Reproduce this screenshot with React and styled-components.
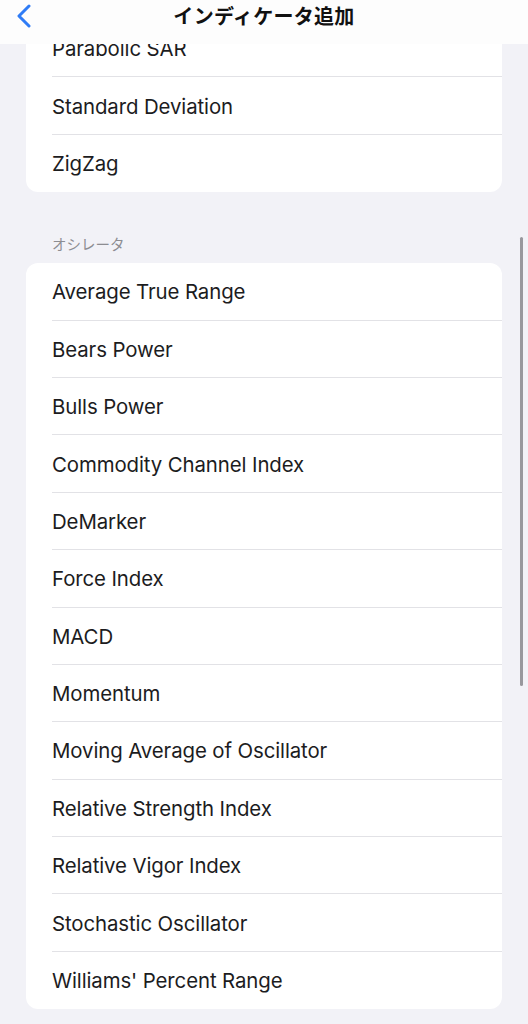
import React from 'react'
import styled, { createGlobalStyle } from 'styled-components'

const GlobalStyle = createGlobalStyle`
  html, body {
    margin: 0;
    padding: 0;
    background: #f2f2f7;
    font-family: Inter, "Noto Sans CJK JP", sans-serif;
    -webkit-font-smoothing: antialiased;
  }
`

const Screen = styled.div`
  position: relative;
  width: 528px;
  height: 1024px;
  overflow: hidden;
  background: #f2f2f7;
`

const NavBar = styled.header`
  position: absolute;
  top: 0;
  left: 0;
  right: 0;
  height: 44px;
  background: #fdfdfd;
  display: flex;
  align-items: center;
  justify-content: center;
  z-index: 2;
`

const BackButton = styled.button`
  position: absolute;
  left: 10px;
  top: 2px;
  width: 28px;
  height: 28px;
  border: 0;
  padding: 0;
  background: none;
  display: flex;
  align-items: center;
  justify-content: center;
`

const Title = styled.h1`
  margin: 0 0 13px;
  font-family: "Noto Sans CJK JP", sans-serif;
  font-size: 20px;
  font-weight: 600;
  color: #111;
  letter-spacing: 0.3px;
`

const Content = styled.main`
  display: flex;
  flex-direction: column;
  padding: 0 26px;
  margin-top: 20px;
`

const SectionLabel = styled.div`
  font-family: "Noto Sans CJK JP", sans-serif;
  font-size: 14.5px;
  color: #8d8d92;
  padding: 41px 26px 9px;
`

const Card = styled.ul`
  list-style: none;
  margin: 0;
  padding: 0;
  background: #fff;
  border-radius: 12px;
  overflow: hidden;
`

const Row = styled.li`
  height: 57.4px;
  display: flex;
  align-items: center;
  margin-left: 26px;
  font-size: 20.4px;
  color: #1c1c1e;
  letter-spacing: -0.1px;
  box-shadow: ${p => (p.$last ? 'none' : 'inset 0 -1px 0 #e2e2e6')};
`

const ScrollIndicator = styled.div`
  position: absolute;
  right: 5px;
  top: 237px;
  width: 3px;
  height: 449px;
  border-radius: 2px;
  background: #98989d;
`

const trend = ['Parabolic SAR', 'Standard Deviation', 'ZigZag']

const oscillators = [
  'Average True Range',
  'Bears Power',
  'Bulls Power',
  'Commodity Channel Index',
  'DeMarker',
  'Force Index',
  'MACD',
  'Momentum',
  'Moving Average of Oscillator',
  'Relative Strength Index',
  'Relative Vigor Index',
  'Stochastic Oscillator',
  "Williams' Percent Range",
]

const List = ({ items }) => (
  <Card>
    {items.map((name, i) => (
      <Row key={name} $last={i === items.length - 1}>
        {name}
      </Row>
    ))}
  </Card>
)

const App = () => (
  <Screen>
    <GlobalStyle />
    <NavBar>
      <BackButton aria-label="戻る">
        <svg width="16" height="24" viewBox="0 0 16 24">
          <polyline
            points="13,2 3,12 13,22"
            fill="none"
            stroke="#2f7cf6"
            strokeWidth="3"
            strokeLinecap="round"
            strokeLinejoin="round"
          />
        </svg>
      </BackButton>
      <Title>インディケータ追加</Title>
    </NavBar>
    <Content>
      <List items={trend} />
      <SectionLabel>オシレータ</SectionLabel>
      <List items={oscillators} />
    </Content>
    <ScrollIndicator />
  </Screen>
)

export default App
